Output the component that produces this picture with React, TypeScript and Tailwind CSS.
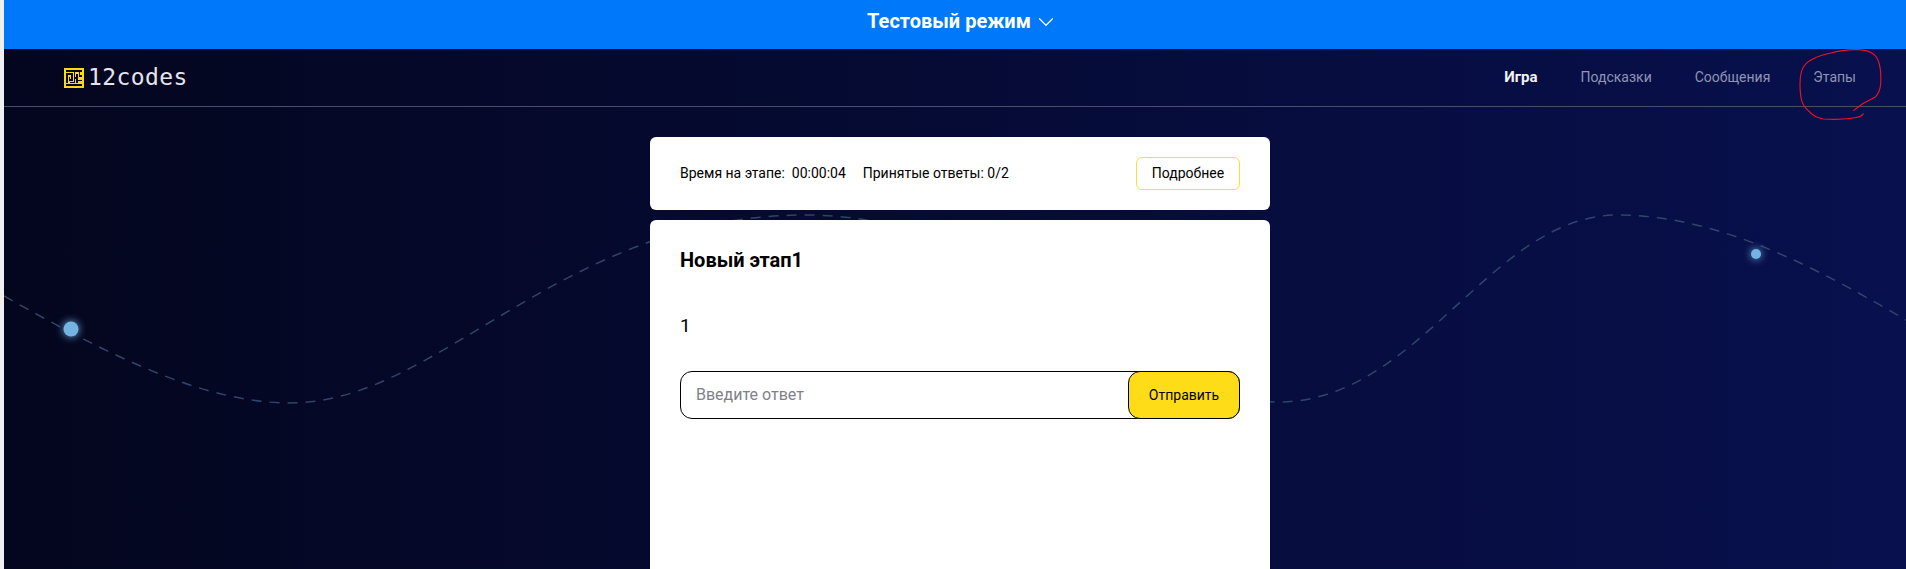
import { ChevronDown } from "lucide-react";

function Logo() {
  return (
    <div className="flex items-center gap-[4px]">
      <svg width="20" height="20" viewBox="0 0 20 20" className="shrink-0" shapeRendering="crispEdges">
        <rect width="20" height="20" fill="#ffd90f" />
        <g fill="none" stroke="#05061c" strokeWidth="1.5">
          <path d="M2 3H18M2 17H18" />
          <path d="M3 15V6H8V12H5.5V9" />
          <path d="M10.5 3V14.5H6" />
          <path d="M13 6V10H10.5M13 10V15M13 12.5H18M15.5 3V8H18" />
        </g>
      </svg>
      <span className="text-[23px] leading-none tracking-[0.4px] text-[#e4e4ea] [font-family:'DejaVu_Sans_Mono',monospace]">12codes</span>
    </div>
  );
}

function Scribble() {
  return (
    <svg width="100" height="80" viewBox="0 0 300 240" className="absolute left-[1790px] top-[44px] pointer-events-none">
      <path
        d="M190 200 L220 178 L255 160 Q270 145 272 120 Q274 85 268 60 Q262 38 250 30 Q235 18 205 17 Q160 16 120 28 Q90 34 75 42 Q52 52 42 66 Q30 84 30 120 Q30 150 35 170 Q42 190 55 200 Q72 220 100 225 Q150 228 190 222 Q218 218 220 208"
        fill="none"
        stroke="#f5102a"
        strokeWidth="3.3"
      />
    </svg>
  );
}

export default function App() {
  return (
    <div className="relative h-[569px] w-full overflow-hidden bg-[#f0f0f0] pl-1 [font-family:Roboto,sans-serif]">
      <div className="relative h-full overflow-hidden bg-linear-to-r from-[#04061e] to-[#08104e]">
        <div className="flex h-[49px] items-center justify-center gap-[2px] bg-[#0078fa] pb-2 pl-[16px] text-white">
          <span className="text-[20px] font-bold">Тестовый режим</span>
          <ChevronDown size={26} strokeWidth={1.1} className="mt-[2px]" />
        </div>

        <header className="flex h-[58px] items-center justify-between border-b border-[#4a4d6c] pl-[60px] pr-[50px]">
          <Logo />
          <nav className="flex items-center gap-[43px] text-[14px] text-[#9095b5]">
            <span className="text-[15px] font-bold text-[#f2f2f5]">Игра</span>
            <span>Подсказки</span>
            <span>Сообщения</span>
            <span>Этапы</span>
          </nav>
        </header>

        <svg width="1902" height="520" viewBox="4 49 1902 520" className="absolute left-0 top-[49px]">
          <path
            d="M4 296 C100 350 200 403 290 403 C440 403 560 215 806 215 C1020 215 1120 402 1278 402 C1420 402 1490 215 1618 215 C1720 215 1820 270 1906 320"
            fill="none"
            stroke="#2f4569"
            strokeWidth="1.5"
            strokeDasharray="10 8"
          />
          <circle cx="71" cy="329" r="7.5" fill="#74b4e2" className="drop-shadow-[0_0_4px_#74b4e2]" />
          <circle cx="1756" cy="254" r="5" fill="#74b4e2" className="drop-shadow-[0_0_4px_#74b4e2]" />
        </svg>

        <main className="relative flex flex-col items-center gap-[10px] pl-[10px] pt-[30px]">
          <section className="flex h-[73px] w-[620px] items-center justify-between rounded-[6px] bg-white px-[30px] text-[14px] text-black">
            <div className="flex whitespace-pre">
              <span>Время на этапе:  00:00:04</span>
              <span className="ml-[17px]">Принятые ответы: 0/2</span>
            </div>
            <button className="h-[33px] w-[104px] rounded-[6px] border border-[#ffdc3c] bg-white text-[14px] text-black">Подробнее</button>
          </section>

          <section className="h-[400px] w-[620px] rounded-t-[6px] bg-white px-[30px] pt-[28px] text-black">
            <h1 className="text-[20px] leading-[24px] font-bold">Новый этап1</h1>
            <p className="mt-[42px] text-[19px] leading-[24px] text-black">1</p>
            <div className="mt-[33px] flex h-[48px] items-stretch rounded-[12px] border border-black">
              <input
                readOnly
                placeholder="Введите ответ"
                className="min-w-0 flex-1 rounded-l-[12px] bg-transparent pl-[15px] text-[16px] outline-none placeholder:text-[#81818a]"
              />
              <button className="-m-px w-[112px] rounded-[12px] border border-black bg-[#ffdc18] text-[14px] text-black">Отправить</button>
            </div>
          </section>
        </main>
      </div>
      <Scribble />
    </div>
  );
}
